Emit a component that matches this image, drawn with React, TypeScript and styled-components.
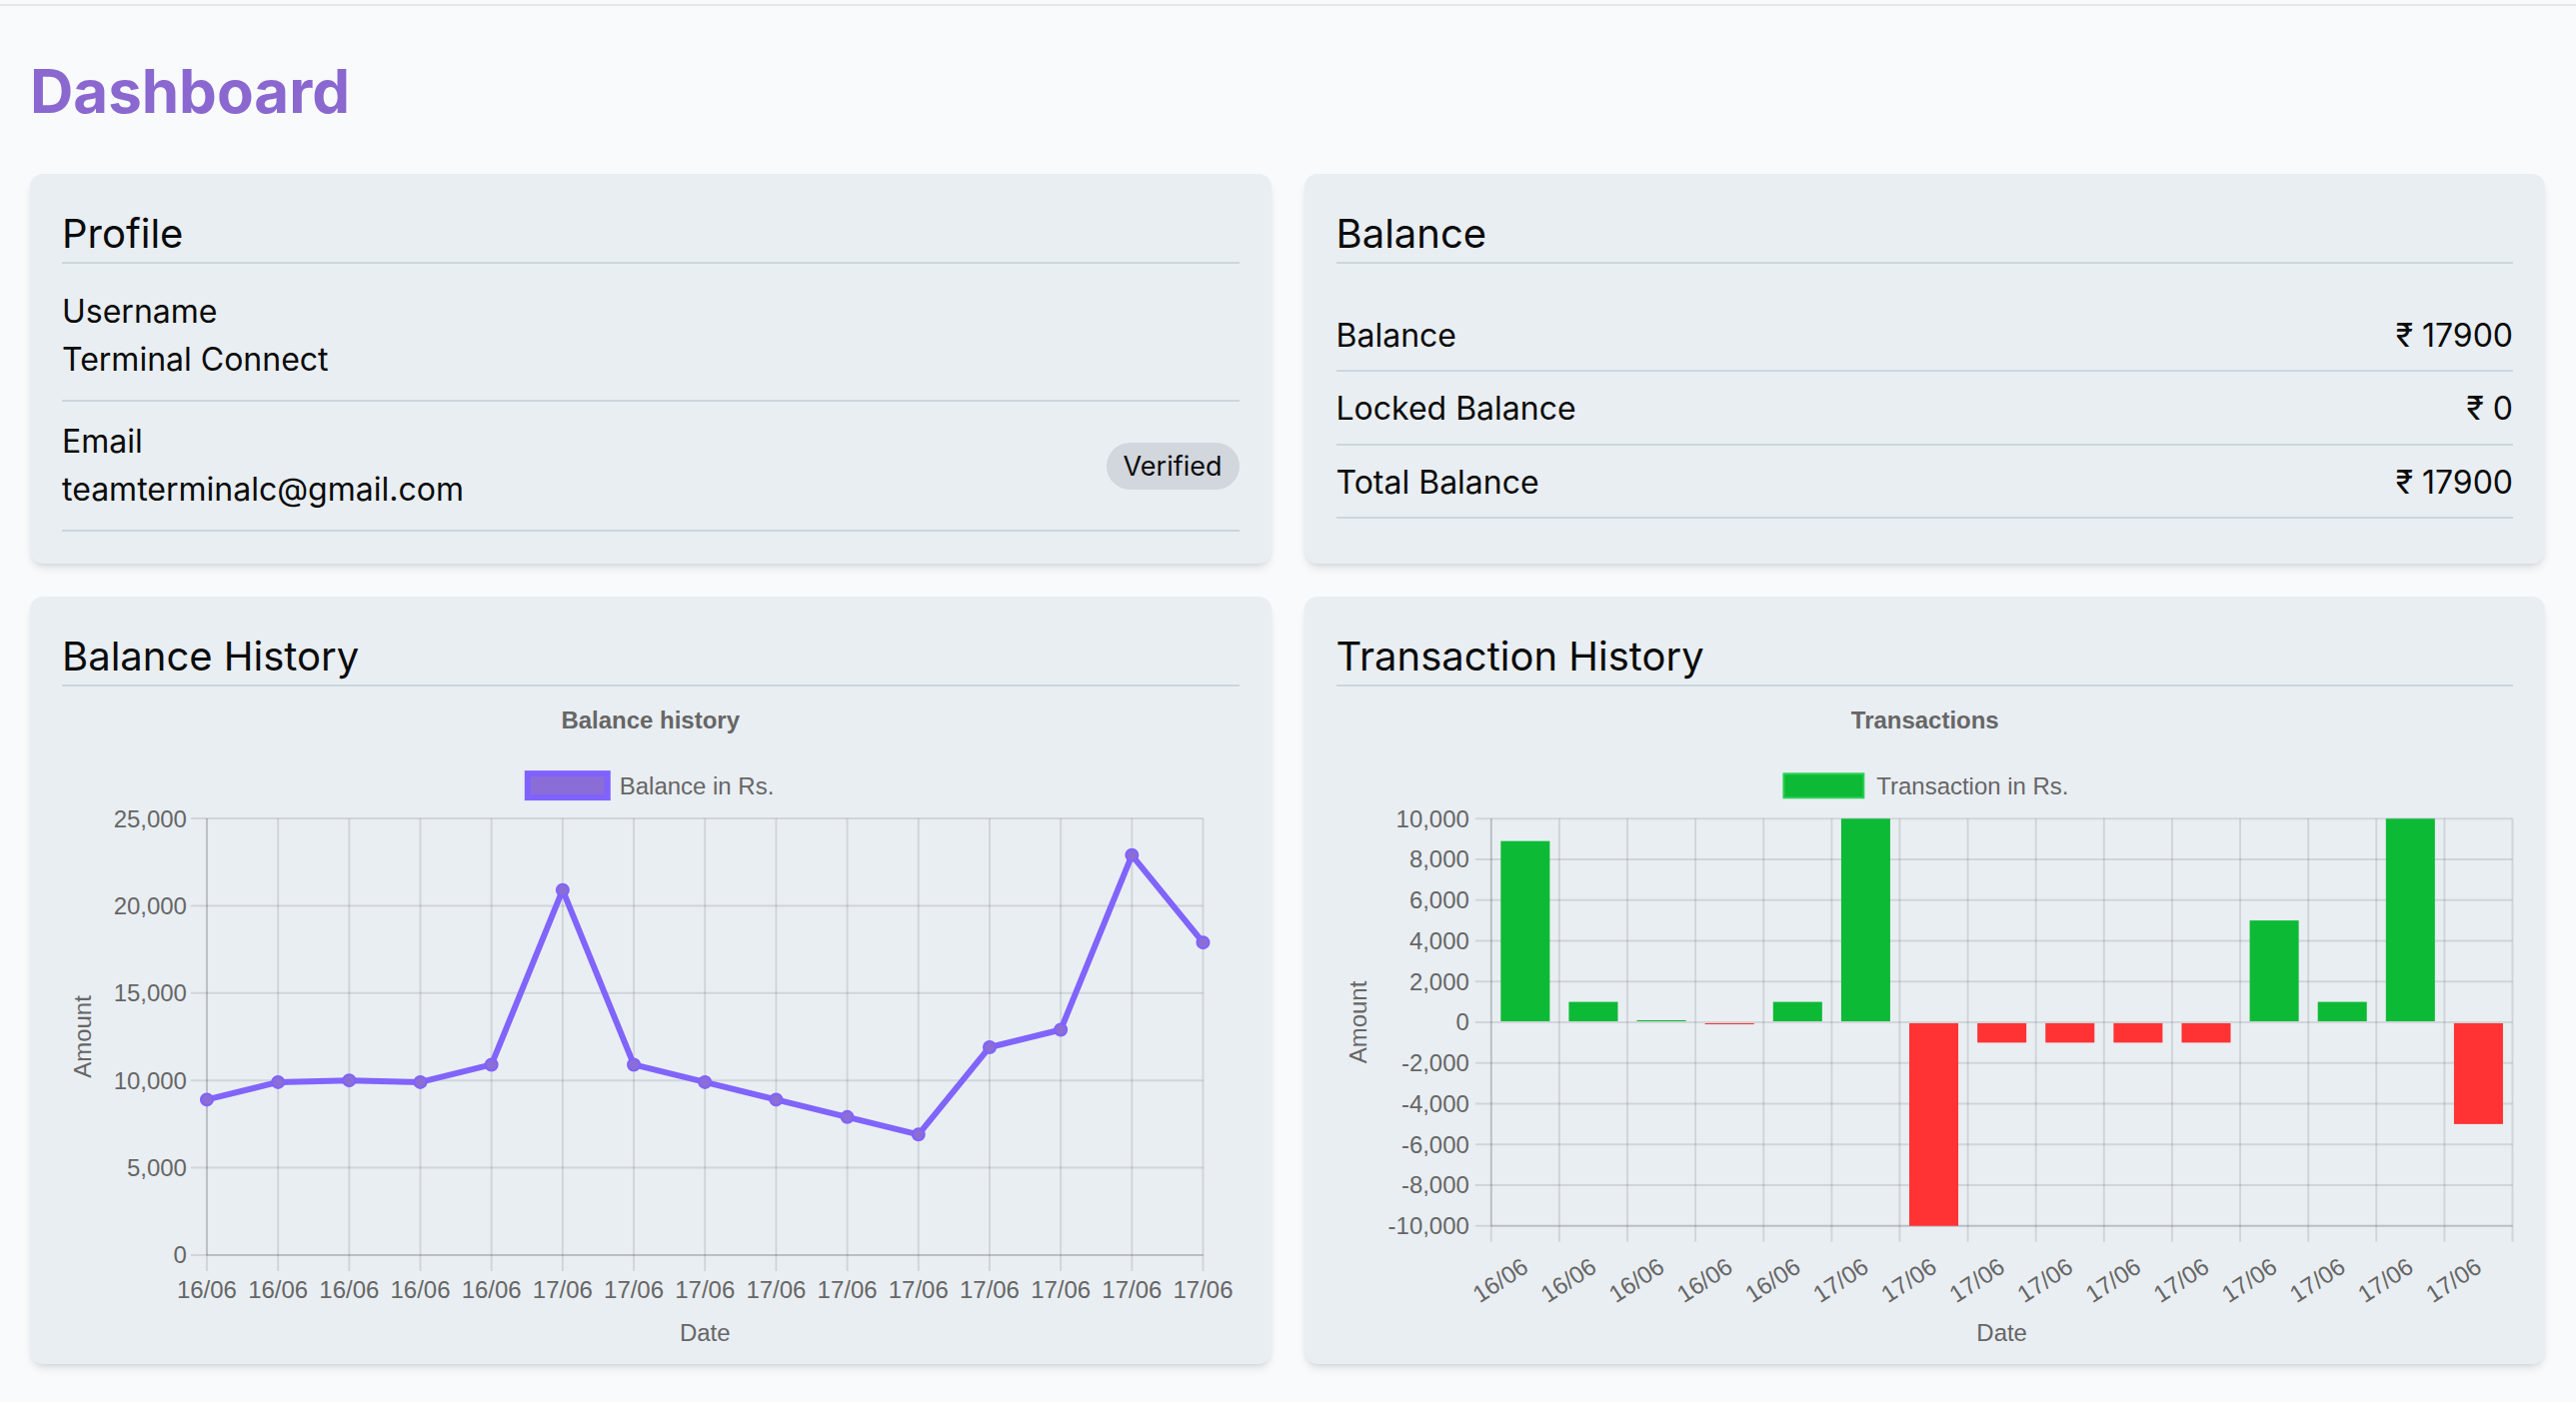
import React from "react";
import styled, { createGlobalStyle } from "styled-components";

const GlobalStyle = createGlobalStyle`
  html, body {
    margin: 0;
    padding: 0;
    background: #f8fafc;
  }
  body {
    font-family: Inter, "Noto Sans", "DejaVu Sans", sans-serif;
    color: #0b0b0b;
  }
  * { box-sizing: border-box; }
`;

const Page = styled.div`
  min-height: 1403px;
  background: #f8fafc;
`;

const TopRule = styled.div`
  height: 2px;
  margin-top: 4px;
  background: #e4e8ee;
`;

const Main = styled.main`
  padding: 0 31px 40px 30px;
`;

const PageTitle = styled.h1`
  margin: 47px 0 45px;
  font-size: 60px;
  line-height: 76px;
  font-weight: 700;
  color: #8a68cf;
`;

const Grid = styled.div`
  display: grid;
  grid-template-columns: 1fr 1fr;
  column-gap: 33px;
  row-gap: 33px;
`;

const Card = styled.section<{ $bottom?: number }>`
  display: flex;
  flex-direction: column;
  background: #e9eef2;
  border-radius: 13px;
  padding: 32px 32px ${(p) => p.$bottom ?? 32}px;
  box-shadow: 0 6px 10px -2px rgba(0, 0, 0, 0.1), 0 3px 6px -3px rgba(0, 0, 0, 0.1);
`;

const CardTitle = styled.h2`
  margin: 0;
  font-size: 40px;
  line-height: 56px;
  font-weight: 400;
  border-bottom: 2px solid #cdd5e0;
`;

const ProfileList = styled.div`
  margin-top: 8px;
`;

const ProfileRow = styled.div`
  display: flex;
  align-items: center;
  justify-content: space-between;
  padding: 16px 0;
  border-bottom: 2px solid #cdd5e0;
`;

const Field = styled.div`
  display: flex;
  flex-direction: column;
  font-size: 32px;
  line-height: 48px;
`;

const Badge = styled.span`
  background: #d2d6dd;
  border-radius: 999px;
  font-size: 27px;
  line-height: 39px;
  padding: 4px 17px;
`;

const BalanceList = styled.div`
  margin-top: 35px;
`;

const BalanceRow = styled.div`
  display: flex;
  justify-content: space-between;
  font-size: 32px;
  line-height: 48px;
  padding: 13px 0 10.3px;
  border-bottom: 2px solid #cdd5e0;
`;

const ChartFrame = styled.svg`
  display: block;
  width: 100%;
  height: 661px;
  overflow: visible;
  font-family: "Liberation Sans", Arial, sans-serif;
`;

const ChartText = styled.text<{ $bold?: boolean }>`
  fill: #666666;
  font-size: 24px;
  font-weight: ${(p) => (p.$bold ? 700 : 400)};
`;

const GRID = "rgba(0,0,0,0.1)";

const txns = [8900, 1000, 100, -100, 1000, 10000, -10000, -1000, -1000, -1000, -1000, 5000, 1000, 10000, -5000];
const labels = ["16/06", "16/06", "16/06", "16/06", "16/06", "17/06", "17/06", "17/06", "17/06", "17/06", "17/06", "17/06", "17/06", "17/06", "17/06"];
const balances = txns.reduce<number[]>((acc, t) => {
  acc.push((acc.length ? acc[acc.length - 1] : 0) + t);
  return acc;
}, []);

const fmt = (v: number) => v.toLocaleString("en-US");

function BalanceChart() {
  const W = 1178;
  const L = 145, R = 1142, T = 132, B = 569;
  const max = 25000;
  const y = (v: number) => B - (v / max) * (B - T);
  const n = balances.length;
  const x = (i: number) => L + (i * (R - L)) / (n - 1);
  const yTicks = [0, 5000, 10000, 15000, 20000, 25000];
  const pts = balances.map((v, i) => `${x(i)},${y(v)}`).join(" ");
  return (
    <ChartFrame viewBox={`0 0 ${W} 661`}>
      <ChartText $bold x={W / 2} y={33} textAnchor="middle" dominantBaseline="central">
        Balance history
      </ChartText>
      <rect x={466} y={87} width={80} height={24} fill="#8a6dd6" stroke="#7f62ff" strokeWidth={6} />
      <ChartText x={558} y={99} dominantBaseline="central">Balance in Rs.</ChartText>
      {yTicks.map((v) => (
        <g key={v}>
          <line x1={L - 16} x2={R} y1={y(v)} y2={y(v)} stroke={GRID} strokeWidth={2} />
          <ChartText x={L - 20} y={y(v)} textAnchor="end" dominantBaseline="central">
            {fmt(v)}
          </ChartText>
        </g>
      ))}
      {balances.map((_, i) => (
        <g key={i}>
          <line x1={x(i)} x2={x(i)} y1={T} y2={B + 16} stroke={GRID} strokeWidth={2} />
          <ChartText x={x(i)} y={604} textAnchor="middle" dominantBaseline="central">
            {labels[i]}
          </ChartText>
        </g>
      ))}
      <line x1={L} x2={R} y1={B} y2={B} stroke={GRID} strokeWidth={2} />
      <line x1={L} x2={L} y1={T} y2={B} stroke={GRID} strokeWidth={2} />
      <polyline points={pts} fill="none" stroke="#8064fb" strokeWidth={6} strokeLinejoin="round" />
      {balances.map((v, i) => (
        <circle key={i} cx={x(i)} cy={y(v)} r={6} fill="#8a6dd6" stroke="#7f62ff" strokeWidth={2} />
      ))}
      <ChartText x={21} y={(T + B) / 2} textAnchor="middle" dominantBaseline="central" transform={`rotate(-90 21 ${(T + B) / 2})`}>
        Amount
      </ChartText>
      <ChartText x={(L + R) / 2} y={647} textAnchor="middle" dominantBaseline="central">
        Date
      </ChartText>
    </ChartFrame>
  );
}

function TransactionChart() {
  const W = 1179;
  const L = 155, R = 1178, T = 132, B = 540;
  const min = -10000, max = 10000;
  const y = (v: number) => B - ((v - min) / (max - min)) * (B - T);
  const n = txns.length;
  const cw = (R - L) / n;
  const bw = cw * 0.72;
  const yTicks = [10000, 8000, 6000, 4000, 2000, 0, -2000, -4000, -6000, -8000, -10000];
  const angle = 33;
  return (
    <ChartFrame viewBox={`0 0 ${W} 661`}>
      <ChartText $bold x={W / 2} y={33} textAnchor="middle" dominantBaseline="central">
        Transactions
      </ChartText>
      <rect x={448} y={87} width={80} height={24} fill="#0dba36" stroke="#2bd052" strokeWidth={2} />
      <ChartText x={541} y={99} dominantBaseline="central">Transaction in Rs.</ChartText>
      {yTicks.map((v) => (
        <g key={v}>
          <line x1={L - 16} x2={R} y1={y(v)} y2={y(v)} stroke={GRID} strokeWidth={2} />
          <ChartText x={L - 22} y={y(v)} textAnchor="end" dominantBaseline="central">
            {fmt(v)}
          </ChartText>
        </g>
      ))}
      {Array.from({ length: n + 1 }).map((_, i) => (
        <line key={i} x1={L + i * cw} x2={L + i * cw} y1={T} y2={B + 16} stroke={GRID} strokeWidth={2} />
      ))}
      <line x1={L} x2={R} y1={B} y2={B} stroke={GRID} strokeWidth={2} />
      <line x1={L} x2={L} y1={T} y2={B} stroke={GRID} strokeWidth={2} />
      {txns.map((v, i) => {
        const cv = Math.max(min, Math.min(max, v));
        const cx = L + i * cw + cw / 2;
        const top = Math.min(y(cv), y(0));
        const h = Math.max(Math.abs(y(cv) - y(0)), 1.5);
        return (
          <rect
            key={i}
            x={cx - bw / 2}
            y={v >= 0 ? top : y(0) + 1}
            width={bw}
            height={h - 1}
            fill={v >= 0 ? "#0dba36" : "#ff3334"}
          />
        );
      })}
      {labels.map((l, i) => {
        const cx = L + i * cw + cw / 2;
        return (
          <ChartText
            key={i}
            x={cx}
            y={578}
            textAnchor="end"
            dominantBaseline="central"
            transform={`rotate(-${angle} ${cx} 578)`}
          >
            {l}
          </ChartText>
        );
      })}
      <ChartText x={22} y={y(0)} textAnchor="middle" dominantBaseline="central" transform={`rotate(-90 22 ${y(0)})`}>
        Amount
      </ChartText>
      <ChartText x={(L + R) / 2} y={647} textAnchor="middle" dominantBaseline="central">
        Date
      </ChartText>
    </ChartFrame>
  );
}

export default function App() {
  return (
    <Page>
      <GlobalStyle />
      <TopRule />
      <Main>
        <PageTitle>Dashboard</PageTitle>
        <Grid>
          <Card>
            <CardTitle>Profile</CardTitle>
            <ProfileList>
              <ProfileRow>
                <Field>
                  <span>Username</span>
                  <span>Terminal Connect</span>
                </Field>
              </ProfileRow>
              <ProfileRow>
                <Field>
                  <span>Email</span>
                  <span>teamterminalc@gmail.com</span>
                </Field>
                <Badge>Verified</Badge>
              </ProfileRow>
            </ProfileList>
          </Card>
          <Card>
            <CardTitle>Balance</CardTitle>
            <BalanceList>
              <BalanceRow>
                <span>Balance</span>
                <span>₹ 17900</span>
              </BalanceRow>
              <BalanceRow>
                <span>Locked Balance</span>
                <span>₹ 0</span>
              </BalanceRow>
              <BalanceRow>
                <span>Total Balance</span>
                <span>₹ 17900</span>
              </BalanceRow>
            </BalanceList>
          </Card>
          <Card $bottom={17}>
            <CardTitle>Balance History</CardTitle>
            <BalanceChart />
          </Card>
          <Card $bottom={17}>
            <CardTitle>Transaction History</CardTitle>
            <TransactionChart />
          </Card>
        </Grid>
      </Main>
    </Page>
  );
}
